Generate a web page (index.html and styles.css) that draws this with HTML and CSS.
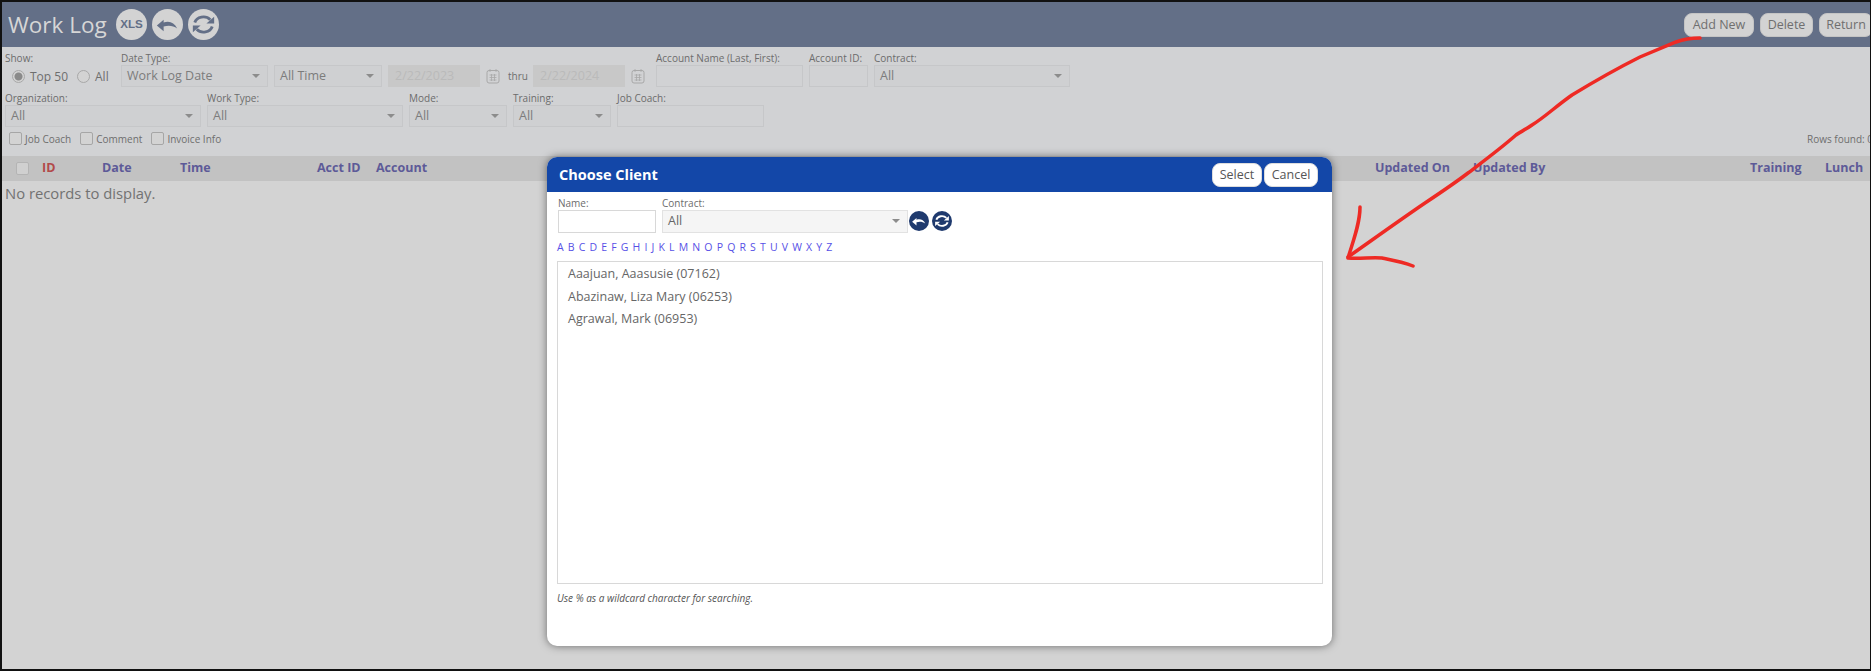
FILE: index.html
```html
<!DOCTYPE html>
<html lang="en">
<head>
    <meta charset="UTF-8">
    <title>Work Log</title>
    <link rel="stylesheet" href="styles.css">
</head>
<body>
<div class="frame">

    <div class="topbar">
        <h1>Work Log</h1>
        <svg class="tool" viewBox="0 0 32 32"><circle cx="16" cy="16" r="16" fill="#d3d3d3"/><text x="16" y="20" text-anchor="middle" class="xls">XLS</text></svg>
        <svg class="tool" viewBox="0 0 32 32"><circle cx="16" cy="16" r="16" fill="#d3d3d3"/><path d="M5 17l7-6v3c6-2 11 0 14 6-4-3-9-3.500-14-2v5z" fill="#636f87"/></svg>
        <svg class="tool" viewBox="0 0 32 32"><circle cx="16" cy="16" r="16" fill="#d3d3d3"/><path d="M7 14c2-6 11-8 16-3M25 18c-2 6-11 8-16 3" fill="none" stroke="#636f87" stroke-width="3"/><path d="M27 8v7h-8zM5 24v-7h8z" fill="#636f87"/></svg>
        <div class="topbar-buttons">
            <button class="add-btn">Add New</button>
            <button class="del-btn">Delete</button>
            <button class="ret-btn">Return</button>
        </div>
    </div>

    <div class="filters">
        <div class="filter-row">
            <div class="field w-show">
                <label>Show:</label>
                <div class="radios">
                    <span class="radio on"></span><span class="radio-text">Top 50</span>
                    <span class="radio"></span><span class="radio-text">All</span>
                </div>
            </div>
            <div class="field w-datetype"><label>Date Type:</label><div class="select">Work Log Date</div></div>
            <div class="field w-alltime"><label>&nbsp;</label><div class="select">All Time</div></div>
            <div class="field w-date"><label>&nbsp;</label><div class="date-input">2/22/2023</div></div>
            <div class="field w-cal"><label>&nbsp;</label>
                <div class="date-extra">
                    <svg class="cal" viewBox="0 0 14 16"><rect x="1" y="2.500" width="12" height="12.500" rx="2" fill="none" stroke="#a8a8a8"/><path d="M4 1v3M10 1v3M3.500 7h7M3.500 9.500h7M3.500 12h7M5.500 6v7M8.500 6v7" stroke="#a8a8a8" fill="none" stroke-width=".8"/></svg>
                    <span class="thru">thru</span>
                </div>
            </div>
            <div class="field w-date"><label>&nbsp;</label><div class="date-input">2/22/2024</div></div>
            <div class="field w-cal2"><label>&nbsp;</label>
                <div class="date-extra">
                    <svg class="cal" viewBox="0 0 14 16"><rect x="1" y="2.500" width="12" height="12.500" rx="2" fill="none" stroke="#a8a8a8"/><path d="M4 1v3M10 1v3M3.500 7h7M3.500 9.500h7M3.500 12h7M5.500 6v7M8.500 6v7" stroke="#a8a8a8" fill="none" stroke-width=".8"/></svg>
                </div>
            </div>
            <div class="field w-account"><label>Account Name (Last, First):</label><div class="text-input"></div></div>
            <div class="field w-acctid"><label>Account ID:</label><div class="text-input"></div></div>
            <div class="field w-contract"><label>Contract:</label><div class="select">All</div></div>
        </div>
        <div class="filter-row">
            <div class="field w-wide"><label>Organization:</label><div class="select">All</div></div>
            <div class="field w-wide"><label>Work Type:</label><div class="select">All</div></div>
            <div class="field w-mode"><label>Mode:</label><div class="select">All</div></div>
            <div class="field w-mode"><label>Training:</label><div class="select">All</div></div>
            <div class="field w-account"><label>Job Coach:</label><div class="text-input"></div></div>
        </div>
        <div class="check-row">
            <span class="check"></span><span class="check-text">Job Coach</span>
            <span class="check"></span><span class="check-text">Comment</span>
            <span class="check"></span><span class="check-text">Invoice Info</span>
            <span class="rows-found">Rows found: 0</span>
        </div>
    </div>

    <div class="grid-head">
        <span class="check head-check"></span>
        <span class="col c-id">ID</span>
        <span class="col c-date">Date</span>
        <span class="col c-time">Time</span>
        <span class="col c-acctid">Acct ID</span>
        <span class="col c-account">Account</span>
        <span class="col c-updon">Updated On</span>
        <span class="col c-updby">Updated By</span>
        <span class="col c-training">Training</span>
        <span class="col c-lunch">Lunch</span>
    </div>
    <div class="no-records">No records to display.</div>

    <div class="dialog">
        <div class="dialog-head">
            <h2>Choose Client</h2>
            <button class="dlg-btn select-btn">Select</button>
            <button class="dlg-btn cancel-btn">Cancel</button>
        </div>
        <div class="dialog-body">
            <div class="dlg-filters">
                <div class="field w-name"><label>Name:</label><div class="text-input white"></div></div>
                <div class="field w-dlgcontract"><label>Contract:</label><div class="select light">All</div></div>
                <svg class="dlg-tool first" viewBox="0 0 32 32"><circle cx="16" cy="16" r="16" fill="#1f3a6e"/><path d="M5 17l7-6v3c6-2 11 0 14 6-4-3-9-3.500-14-2v5z" fill="#fff"/></svg>
                <svg class="dlg-tool" viewBox="0 0 32 32"><circle cx="16" cy="16" r="16" fill="#1f3a6e"/><path d="M7 14c2-6 11-8 16-3M25 18c-2 6-11 8-16 3" fill="none" stroke="#fff" stroke-width="3"/><path d="M27 8v7h-8zM5 24v-7h8z" fill="#fff"/></svg>
            </div>
            <div class="letters">
                <a>A</a><a>B</a><a>C</a><a>D</a><a>E</a><a>F</a><a>G</a><a>H</a><a>I</a><a>J</a><a>K</a><a>L</a><a>M</a><a>N</a><a>O</a><a>P</a><a>Q</a><a>R</a><a>S</a><a>T</a><a>U</a><a>V</a><a>W</a><a>X</a><a>Y</a><a>Z</a>
            </div>
            <div class="client-list">
                <div class="client">Aaajuan, Aaasusie (07162)</div>
                <div class="client">Abazinaw, Liza Mary (06253)</div>
                <div class="client">Agrawal, Mark (06953)</div>
            </div>
            <div class="hint">Use % as a wildcard character for searching.</div>
        </div>
    </div>

    <svg class="scribble" viewBox="0 0 1871 671" width="1871" height="671">
        <path d="M1700 38C1690 38 1684 39 1676 42L1640 57C1620 67 1595 81 1572 95C1555 107 1545 117 1532 125C1525 130 1520 132 1516 135C1500 149 1485 160 1468 173C1455 183 1440 193 1425 203C1400 220 1375 238 1348 257" fill="none" stroke="#ee2a24" stroke-width="3.500" stroke-linecap="round"/>
        <path d="M1360 207C1360 224 1353 241 1348 258C1360 259 1372 257 1382 258C1392 260 1403 262 1413 266" fill="none" stroke="#ee2a24" stroke-width="3.500" stroke-linecap="round" stroke-linejoin="round"/>
    </svg>
</div>
</body>
</html>
```
FILE: styles.css
```css
* {
    box-sizing: border-box;
}
html, body {
    margin: 0;
    padding: 0;
}
body {
    font-family: "Open Sans", sans-serif;
    color: #6e6e6e;
}
.frame {
    position: relative;
    width: 1871px;
    height: 671px;
    overflow: hidden;
    background: #d3d3d3;
    border-top: 2px solid #111;
    border-left: 2px solid #111;
    border-right: 1px solid #111;
    border-bottom: 2px solid #111;
}

/* top bar */
.topbar {
    display: flex;
    align-items: center;
    height: 45px;
    padding-left: 6px;
    background: #636f87;
}
.topbar h1 {
    margin: 0 9px 0 0;
    font-size: 22.500px;
    font-weight: 400;
    color: #d6d6d6;
}
.tool {
    width: 31px;
    height: 31px;
    margin-right: 5px;
}
.xls {
    font-family: "Liberation Sans", sans-serif;
    font-size: 12px;
    font-weight: 700;
    fill: #636f87;
}
.topbar-buttons {
    display: flex;
    gap: 6px;
    margin-left: auto;
    margin-right: -3px;
}
.topbar-buttons button {
    height: 24px;
    padding: 0;
    border: 1px solid #c4c4c4;
    border-radius: 8px;
    background: #d3d3d3;
    color: #6f6f6f;
    font-family: "Open Sans", sans-serif;
    font-size: 12.500px;
}
.add-btn { width: 70px; }
.del-btn { width: 53px; }
.ret-btn { width: 54px; }

/* filters */
.filters {
    height: 109px;
    padding: 4px 0 0 3px;
    background: #d1d2d4;
}
.filter-row {
    display: flex;
    gap: 6px;
    margin-bottom: 3.500px;
}
.field label {
    display: block;
    height: 14px;
    font-size: 10px;
    line-height: 14px;
    white-space: nowrap;
    color: #6c6c6c;
}
.select, .text-input, .date-input {
    height: 22px;
    border: 1px solid #c6c7c9;
    font-size: 12.500px;
    line-height: 20px;
}
.select {
    position: relative;
    padding-left: 5px;
    color: #7c7c7c;
    background: #cfd0d2;
}
.select::after {
    content: "";
    position: absolute;
    right: 7px;
    top: 8px;
    border-left: 4px solid transparent;
    border-right: 4px solid transparent;
    border-top: 4px solid #8c8c8c;
}
.date-input {
    padding-left: 6px;
    border-color: #c8c8c8;
    background: #c8c8c8;
    color: #bababa;
}
.w-show { width: 110px; }
.w-datetype { width: 147px; }
.w-alltime { width: 108px; }
.w-date { width: 92px; }
.w-cal { width: 41px; }
.w-cal2 { width: 19px; }
.w-account { width: 147px; }
.w-acctid { width: 59px; }
.w-contract { width: 196px; }
.w-wide { width: 196px; }
.w-mode { width: 98px; }
.radios {
    display: flex;
    align-items: center;
    height: 22px;
    padding-left: 7px;
    font-size: 12px;
    white-space: nowrap;
}
.radio {
    flex: none;
    width: 13px;
    height: 13px;
    margin-right: 5px;
    border: 1px solid #a8a8a8;
    border-radius: 50%;
    background: #d3d3d3;
}
.radio.on {
    background: radial-gradient(circle, #8a8a8a 0 3.500px, #d3d3d3 4.500px);
}
.radio-text {
    margin-right: 9px;
}
.date-extra {
    display: flex;
    align-items: center;
    height: 22px;
}
.cal {
    flex: none;
    width: 14px;
    height: 16px;
}
.thru {
    margin-left: 8px;
    font-size: 10px;
}
.check-row {
    position: relative;
    display: flex;
    align-items: center;
    height: 15px;
    margin-top: 4.500px;
    padding-left: 4px;
}
.check {
    flex: none;
    width: 13px;
    height: 13px;
    border: 1px solid #a6a6a6;
    border-radius: 2px;
    background: #d3d3d3;
}
.check-text {
    margin: 0 9px 0 3px;
    font-size: 10px;
}
.rows-found {
    position: absolute;
    left: 1802px;
    font-size: 10px;
    white-space: nowrap;
}

/* grid */
.grid-head {
    position: relative;
    height: 25px;
    background: #c2c2c2;
}
.head-check {
    position: absolute;
    left: 14px;
    top: 6px;
    border-color: #b4b4b4;
    background: #d0d0d0;
}
.col {
    position: absolute;
    top: 3px;
    font-size: 12.500px;
    font-weight: 700;
    color: #5d5a98;
    white-space: nowrap;
}
.c-id { left: 40px; color: #b24a4a; }
.c-date { left: 100px; }
.c-time { left: 178px; }
.c-acctid { left: 315px; }
.c-account { left: 374px; }
.c-updon { left: 1373px; }
.c-updby { left: 1471px; }
.c-training { left: 1748px; }
.c-lunch { left: 1823px; }
.no-records {
    padding: 2px 0 0 3px;
    font-size: 14.800px;
    color: #727272;
}

/* client dialog */
.dialog {
    position: absolute;
    left: 545px;
    top: 155px;
    width: 785px;
    height: 489px;
    border-radius: 10px;
    background: #fff;
    box-shadow: 0 0 9px rgba(0, 0, 0, .5);
    overflow: hidden;
}
.dialog-head {
    display: flex;
    align-items: center;
    gap: 2px;
    height: 35px;
    padding: 0 14px 0 12px;
    background: #1347a8;
}
.dialog-head h2 {
    margin: 0 auto 0 0;
    font-size: 14.500px;
    font-weight: 700;
    color: #fff;
}
.dlg-btn {
    height: 24px;
    padding: 0;
    border: 1px solid #ddd;
    border-radius: 8px;
    background: #fff;
    color: #555;
    font-family: "Open Sans", sans-serif;
    font-size: 12.500px;
}
.select-btn { width: 50px; }
.cancel-btn { width: 54px; }
.dialog-body {
    padding: 4px 9px 0 10px;
}
.dlg-filters {
    display: flex;
    align-items: flex-end;
    gap: 6px;
    margin-left: 1px;
}
.w-name { width: 98px; }
.w-dlgcontract { width: 246px; }
.text-input.white {
    height: 23px;
    background: #fff;
    border-color: #d8d8d8;
}
.select.light {
    height: 23px;
    background: #f5f5f5;
    border-color: #e2e2e2;
    color: #666;
}
.dlg-tool {
    width: 20px;
    height: 20px;
    margin: 0 -3px 2px 0;
}
.dlg-tool.first {
    margin-left: -5px;
}
.letters {
    display: flex;
    gap: 4.150px;
    height: 28px;
    padding-top: 7px;
    font-size: 10.500px;
    line-height: 14px;
    color: #5650e6;
}
.client-list {
    height: 323px;
    padding-top: 1px;
    border: 1px solid #d8d8d8;
}
.client {
    height: 22.500px;
    padding-left: 10px;
    font-size: 12.500px;
    line-height: 22.500px;
    color: #666;
}
.hint {
    margin-top: 7px;
    font-size: 10px;
    font-style: italic;
    color: #555;
}

/* red arrow drawn over the screenshot */
.scribble {
    position: absolute;
    left: -2px;
    top: -2px;
    pointer-events: none;
}
```
